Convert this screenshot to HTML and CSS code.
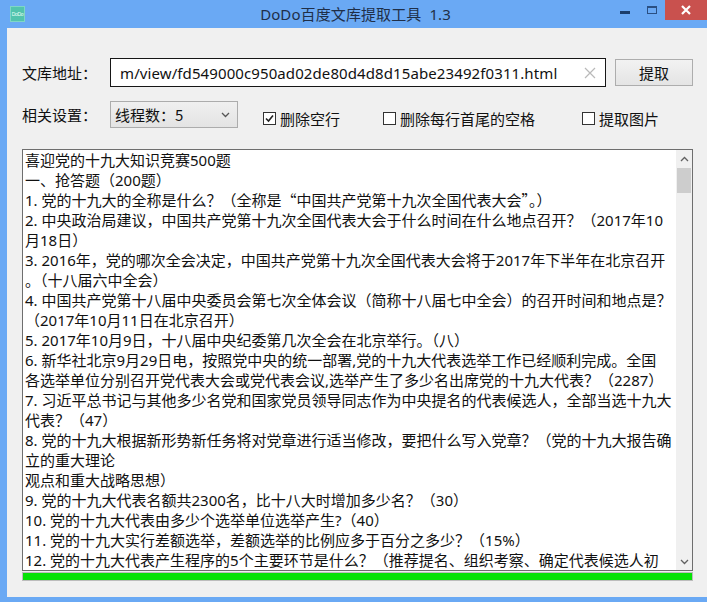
FILE: index.html
```html
<!DOCTYPE html>
<html lang="zh-CN">
<head>
<meta charset="utf-8">
<title>DoDo百度文库提取工具 1.3</title>
<link rel="stylesheet" href="styles.css">
</head>
<body>
<div class="window">
  <div class="titlebar">
    <div class="tb-left">
      <div class="app-icon"><span>DoDo</span></div>
    </div>
    <div class="title">DoDo百度文库提取工具&nbsp;&nbsp;1.3</div>
    <div class="tb-right">
      <div class="ctl ctl-min"><span></span></div>
      <div class="ctl ctl-max"><span></span></div>
      <div class="ctl ctl-close">
        <svg width="12" height="12" viewBox="0 0 12 12"><path d="M2 2 L10 10 M10 2 L2 10" stroke="#fff" stroke-width="2.2" fill="none"/></svg>
      </div>
    </div>
  </div>
  <div class="client">
    <div class="row row-url">
      <label class="lbl">文库地址：</label>
      <div class="input">
        <span class="input-text">m/view/fd549000c950ad02de80d4d8d15abe23492f0311.html</span>
        <svg class="clear" width="14" height="14" viewBox="0 0 14 14"><path d="M2 2 L12 12 M12 2 L2 12" stroke="#b9b9b9" stroke-width="1.2" fill="none"/></svg>
      </div>
      <button class="btn">提取</button>
    </div>
    <div class="row row-settings">
      <label class="lbl">相关设置：</label>
      <div class="select">
        <span>线程数：5</span>
        <svg width="9" height="6" viewBox="0 0 9 6"><path d="M1 1 L4.5 4.5 L8 1" stroke="#555" stroke-width="1.3" fill="none"/></svg>
      </div>
      <div class="checks">
        <label class="chk chk1"><span class="box checked"><svg width="11" height="11" viewBox="0 0 11 11"><path d="M2 5.5 L4.5 8 L9 2.5" stroke="#222" stroke-width="1.6" fill="none"/></svg></span>删除空行</label>
        <label class="chk chk2"><span class="box"></span>删除每行首尾的空格</label>
        <label class="chk chk3"><span class="box"></span>提取图片</label>
      </div>
    </div>
    <div class="textarea">
      <div class="text">
        <div class="ln">喜迎党的十九大知识竞赛500题</div>
        <div class="ln">一、抢答题（200题）</div>
        <div class="ln">1. 党的十九大的全称是什么？（全称是<span class="q">“</span>中国共产党第十九次全国代表大会<span class="q">”</span>。）</div>
        <div class="ln">2. 中央政治局建议，中国共产党第十九次全国代表大会于什么时间在什么地点召开？（2017年10</div>
        <div class="ln">月18日）</div>
        <div class="ln">3. 2016年，党的哪次全会决定，中国共产党第十九次全国代表大会将于2017年下半年在北京召开</div>
        <div class="ln">。（十八届六中全会）</div>
        <div class="ln">4. 中国共产党第十八届中央委员会第七次全体会议（简称十八届七中全会）的召开时间和地点是？</div>
        <div class="ln">（2017年10月11日在北京召开）</div>
        <div class="ln">5. 2017年10月9日，十八届中央纪委第几次全会在北京举行。（八）</div>
        <div class="ln">6. 新华社北京9月29日电，按照党中央的统一部署,党的十九大代表选举工作已经顺利完成。全国</div>
        <div class="ln">各选举单位分别召开党代表大会或党代表会议,选举产生了多少名出席党的十九大代表？（2287）</div>
        <div class="ln">7. 习近平总书记与其他多少名党和国家党员领导同志作为中央提名的代表候选人，全部当选十九大</div>
        <div class="ln">代表？（47）</div>
        <div class="ln">8. 党的十九大根据新形势新任务将对党章进行适当修改，要把什么写入党章？（党的十九大报告确</div>
        <div class="ln">立的重大理论</div>
        <div class="ln">观点和重大战略思想）</div>
        <div class="ln">9. 党的十九大代表名额共2300名，比十八大时增加多少名？（30）</div>
        <div class="ln">10. 党的十九大代表由多少个选举单位选举产生?（40）</div>
        <div class="ln">11. 党的十九大实行差额选举，差额选举的比例应多于百分之多少？（15%）</div>
        <div class="ln">12. 党的十九大代表产生程序的5个主要环节是什么？（推荐提名、组织考察、确定代表候选人初</div>
      </div>
      <div class="vscroll">
        <div class="arrow up"><svg width="9" height="6" viewBox="0 0 9 6"><path d="M1 5 L4.5 1.5 L8 5" stroke="#606060" stroke-width="1.3" fill="none"/></svg></div>
        <div class="track"><div class="thumb"></div></div>
        <div class="arrow down"><svg width="9" height="6" viewBox="0 0 9 6"><path d="M1 1 L4.5 4.5 L8 1" stroke="#606060" stroke-width="1.3" fill="none"/></svg></div>
      </div>
    </div>
    <div class="progress"><div class="fill" style="width:100%"></div></div>
  </div>
</div>
</body>
</html>
```
FILE: styles.css
```css
* { box-sizing: border-box; }
html, body { margin: 0; padding: 0; }
body {
  width: 707px;
  height: 602px;
  overflow: hidden;
  background: #6aa9f4;
  font-family: "Noto Sans", "Noto Sans CJK SC", sans-serif;
  color: #000;
}
.window {
  width: 707px;
  height: 602px;
  display: flex;
  flex-direction: column;
  background: #6aa9f4;
  padding: 0 0 5px 7px;
}
.titlebar {
  height: 28px;
  margin-left: -7px;
  display: grid;
  grid-template-columns: 1fr auto 1fr;
  align-items: start;
}
.tb-left { padding: 6px 0 0 10px; }
.app-icon {
  width: 15px;
  height: 16px;
  background: #52c4ad;
  border: 1px solid #7fd6c6;
  display: flex;
  align-items: center;
  justify-content: center;
  overflow: hidden;
}
.app-icon span {
  font-size: 5px;
  line-height: 5px;
  color: #e8fff8;
  font-family: "Liberation Sans", sans-serif;
  letter-spacing: -0.3px;
}
.title {
  padding-top: 5px;
  font-size: 15px;
  line-height: 18px;
  color: #1f2f48;
  font-family: "Noto Sans", "Noto Sans CJK SC", sans-serif;
  letter-spacing: 0.1px;
  padding-left: 4px;
}
.tb-right {
  display: flex;
  justify-content: flex-end;
  align-items: flex-start;
}
.ctl {
  height: 20px;
  display: flex;
  align-items: center;
  justify-content: center;
}
.ctl-min { width: 26px; }
.ctl-min span {
  display: block;
  width: 10px;
  height: 3px;
  background: #1b3d6b;
  margin-top: 4px;
}
.ctl-max { width: 27px; }
.ctl-max span {
  display: block;
  width: 10px;
  height: 8px;
  border: 1px solid #2a4f82;
  border-top-width: 2px;
}
.ctl-close {
  width: 42px;
  background: #c9514e;
}
.client {
  flex: 1;
  background: #f0f0f0;
  padding: 30px 14px 0 15px;
  display: flex;
  flex-direction: column;
}
.row {
  display: flex;
  align-items: center;
}
.lbl {
  width: 88px;
  font-size: 15px;
  font-family: "Noto Sans CJK SC", sans-serif;
  color: #111;
  flex: none;
}
.row-url { height: 29px; }
.input {
  width: 496px;
  height: 29px;
  border: 1px solid #161616;
  background: #fff;
  display: flex;
  align-items: center;
  padding: 0 8px 0 9px;
  overflow: hidden;
}
.input-text {
  flex: 1;
  font-size: 15px;
  font-family: "Noto Sans", sans-serif;
  color: #111;
  white-space: nowrap;
  letter-spacing: 0.1px;
}
.clear { flex: none; margin-left: 6px; }
.btn {
  margin-left: 9px;
  width: 78px;
  height: 27px;
  border: 1px solid #adadad;
  background: linear-gradient(#f2f2f2, #e4e4e4);
  font-size: 15px;
  font-family: "Noto Sans CJK SC", sans-serif;
  color: #111;
  padding: 0;
}
.row-settings {
  margin-top: 14px;
  height: 27px;
}
.select {
  width: 128px;
  height: 27px;
  border: 1px solid #acacac;
  background: linear-gradient(#f0f0f0, #e3e3e3);
  display: flex;
  align-items: center;
  justify-content: space-between;
  padding: 0 7px 0 4px;
  font-size: 15px;
  font-family: "Noto Sans CJK SC", sans-serif;
  color: #111;
}
.checks {
  display: flex;
  align-items: center;
  margin-top: 8px;
}
.chk {
  display: flex;
  align-items: center;
  font-size: 15px;
  font-family: "Noto Sans CJK SC", sans-serif;
  color: #111;
  white-space: nowrap;
}
.chk1 { margin-left: 25px; }
.chk2 { margin-left: 43px; }
.chk3 { margin-left: 47px; }
.box {
  width: 13px;
  height: 13px;
  border: 1px solid #333;
  background: #fff;
  margin-right: 4px;
  display: flex;
  align-items: center;
  justify-content: center;
}
.textarea {
  margin-top: 21px;
  height: 422px;
  width: 671px;
  border: 1px solid #6e6e6e;
  background: #fff;
  display: flex;
  overflow: hidden;
}
.text {
  flex: 1;
  padding: 0 0 0 2px;
  overflow: hidden;
}
.ln {
  font-size: 15px;
  line-height: 20px;
  white-space: nowrap;
  color: #111;
  font-family: "Noto Sans", "Noto Sans CJK SC", sans-serif;
}
.q { font-family: "Noto Sans CJK SC", sans-serif; }
.vscroll {
  width: 16px;
  flex: none;
  background: #f0f0f0;
  display: flex;
  flex-direction: column;
}
.arrow {
  height: 17px;
  display: flex;
  align-items: center;
  justify-content: center;
}
.track { flex: 1; padding: 1px 1px; }
.thumb {
  height: 25px;
  background: #cdcdcd;
}
.progress {
  margin-top: 1px;
  width: 671px;
  height: 9px;
  border: 1px solid #bcbcbc;
  background: #e6e6e6;
}
.fill {
  height: 100%;
  background: #06e206;
}
```
